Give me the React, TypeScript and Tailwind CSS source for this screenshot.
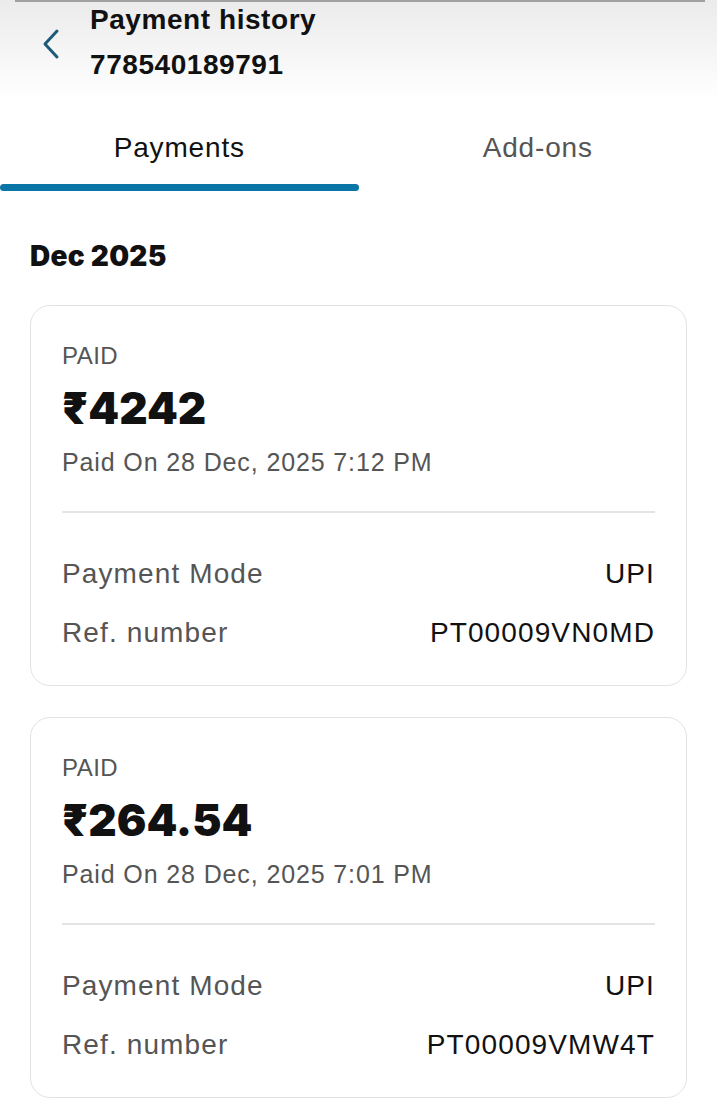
import React, { useState } from 'react';

interface Payment {
  id: string;
  amount: string;
  paidOn: string;
  mode: string;
  ref: string;
}

const payments: Payment[] = [
  { id: '1', amount: '₹4242', paidOn: 'Paid On 28 Dec, 2025 7:12 PM', mode: 'UPI', ref: 'PT00009VN0MD' },
  { id: '2', amount: '₹264.54', paidOn: 'Paid On 28 Dec, 2025 7:01 PM', mode: 'UPI', ref: 'PT00009VMW4T' },
];

const sans = { fontFamily: '"Liberation Sans", Arial, sans-serif' };
const heavy = { fontFamily: 'Inter, "Liberation Sans", sans-serif' };

const PaymentCard: React.FC<{ p: Payment }> = ({ p }) => (
  <div className="mx-[30px] rounded-[20px] border border-[#e3e3e3] bg-white px-[31px] pt-[35px] pb-[36px]">
    <div className="text-[24px] leading-[30px] tracking-[0.02em] text-[#555]">PAID</div>
    <div className="mt-[12px] text-[44px] leading-[50px] font-black text-[#111]" style={heavy}>
      {p.amount}
    </div>
    <div className="mt-[13px] text-[25px] leading-[32px] tracking-[0.035em] text-[#555]">{p.paidOn}</div>
    <div className="mt-[33px] h-[2px] bg-[#e4e4e4]" />
    <div className="mt-[45px] flex items-center justify-between text-[28px] leading-[32px] tracking-[0.04em]">
      <span className="text-[#555]">Payment Mode</span>
      <span className="text-[#111]">{p.mode}</span>
    </div>
    <div className="mt-[27px] flex items-center justify-between text-[28px] leading-[32px] tracking-[0.04em]">
      <span className="text-[#555]">Ref. number</span>
      <span className="text-[#111]">{p.ref}</span>
    </div>
  </div>
);

const App: React.FC = () => {
  const [tab, setTab] = useState<'payments' | 'addons'>('payments');

  return (
    <div className="min-h-screen bg-white" style={sans}>
      {/* Header */}
      <div className="relative h-[100px] bg-gradient-to-b from-[#ebebeb] to-white">
        <div className="absolute left-[15px] right-[12px] top-0 h-[2px] bg-[#a0a0a0]" />
        <div className="flex">
          <div className="w-[90px] pl-[40px] pt-[28px]">
            <svg width="24" height="32" viewBox="0 0 24 32" fill="none">
              <path d="M17 3 L5 16 L17 29" stroke="#1d5b79" strokeWidth="3" strokeLinecap="round" strokeLinejoin="round" />
            </svg>
          </div>
          <div className="text-[#111] font-bold">
            <div className="text-[28px] leading-[40px] tracking-[0.02em]">Payment history</div>
            <div className="text-[28px] leading-[50px] tracking-[0.02em]">778540189791</div>
          </div>
        </div>
      </div>

      {/* Tabs */}
      <div className="grid grid-cols-2">
        <button onClick={() => setTab('payments')} className="flex flex-col items-center">
          <span className={`pt-[32px] text-[28px] leading-[32px] tracking-[0.03em] ${tab === 'payments' ? 'text-[#111]' : 'text-[#555]'}`}>
            Payments
          </span>
          <span className={`mt-[20px] h-[7px] w-full rounded-full ${tab === 'payments' ? 'bg-[#0a76a8]' : 'bg-transparent'}`} />
        </button>
        <button onClick={() => setTab('addons')} className="flex flex-col items-center">
          <span className={`pt-[32px] text-[28px] leading-[32px] tracking-[0.03em] ${tab === 'addons' ? 'text-[#111]' : 'text-[#555]'}`}>
            Add-ons
          </span>
          <span className={`mt-[20px] h-[7px] w-full rounded-full ${tab === 'addons' ? 'bg-[#0a76a8]' : 'bg-transparent'}`} />
        </button>
      </div>

      {/* Month */}
      <div className="mt-[47px] pl-[30px] text-[28px] leading-[36px] font-black tracking-[0.01em] text-[#111]" style={heavy}>
        Dec 2025
      </div>

      <div className="mt-[31px] flex flex-col gap-[31px] pb-[20px]">
        {payments.map((p) => (
          <PaymentCard key={p.id} p={p} />
        ))}
      </div>
    </div>
  );
};

export default App;
